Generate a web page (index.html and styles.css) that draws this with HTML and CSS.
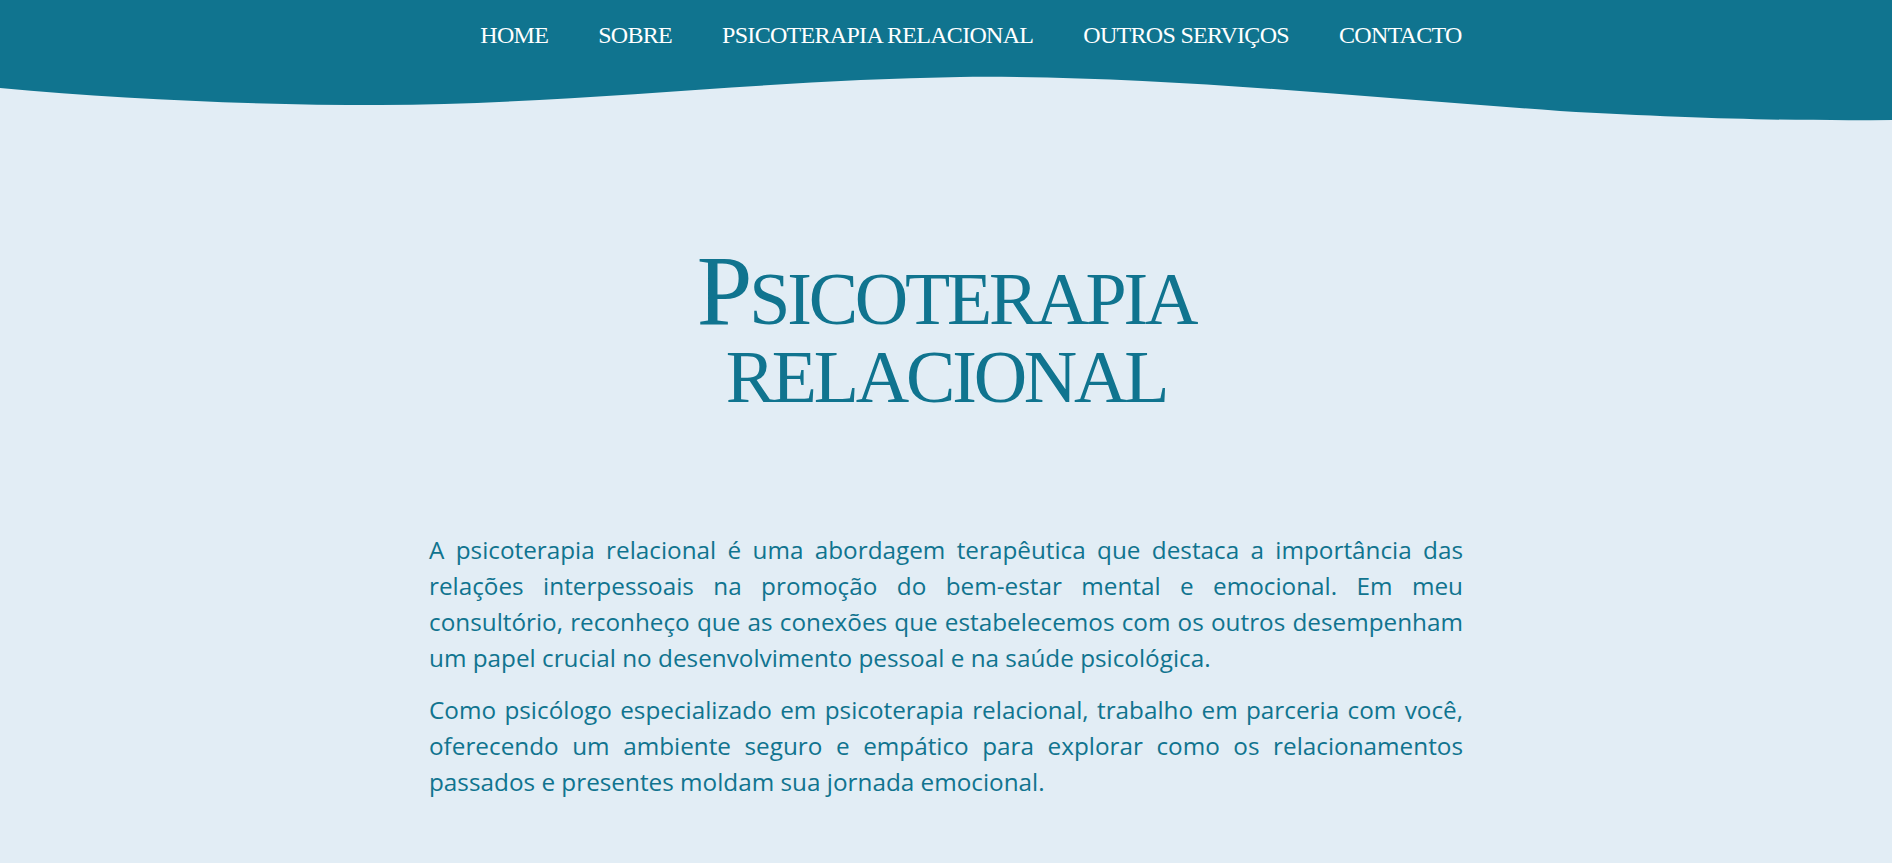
FILE: index.html
```html
<!DOCTYPE html>
<html lang="pt">
<head>
<meta charset="utf-8">
<title>Psicoterapia Relacional</title>
<link rel="stylesheet" href="styles.css">
</head>
<body>
<header class="site-header">
  <nav class="main-nav">
    <a href="#" class="nav-link">HOME</a>
    <a href="#" class="nav-link">SOBRE</a>
    <a href="#" class="nav-link">PSICOTERAPIA RELACIONAL</a>
    <a href="#" class="nav-link">OUTROS SERVIÇOS</a>
    <a href="#" class="nav-link">CONTACTO</a>
  </nav>
</header>
<svg class="wave" viewBox="0 0 1892 46" preserveAspectRatio="none" aria-hidden="true">
  <path d="M0 12 C 120 23, 250 29, 380 29 C 560 29, 760 4, 960 1 C 1150 -1, 1350 20, 1560 35 C 1700 43, 1800 45, 1892 44 L1892 0 L0 0 Z" fill="#10748f"/>
</svg>
<main class="content">
  <h1 class="page-title">Psicoterapia<br>relacional</h1>
  <div class="text-block">
    <p>A psicoterapia relacional é uma abordagem terapêutica que destaca a importância das relações interpessoais na promoção do bem-estar mental e emocional. Em meu consultório, reconheço que as conexões que estabelecemos com os outros desempenham um papel crucial no desenvolvimento pessoal e na saúde psicológica.</p>
    <p>Como psicólogo especializado em psicoterapia relacional, trabalho em parceria com você, oferecendo um ambiente seguro e empático para explorar como os relacionamentos passados e presentes moldam sua jornada emocional.</p>
  </div>
</main>
</body>
</html>
```

FILE: styles.css
```css
html, body {
  margin: 0;
  padding: 0;
}
body {
  background: #e2edf5;
  color: #10748f;
  font-family: "Open Sans", "Lato", sans-serif;
}
.site-header {
  background: #10748f;
  height: 76px;
}
.main-nav {
  display: flex;
  justify-content: center;
  gap: 50px;
  padding-top: 20px;
  padding-left: 50px;
}
.nav-link {
  font-family: "Liberation Serif", serif;
  font-size: 24px;
  letter-spacing: -0.7px;
  line-height: 30px;
  color: #ffffff;
  text-decoration: none;
}
.wave {
  display: block;
  width: 100%;
  height: 46px;
}
.content {
  padding-top: 130px;
  padding-bottom: 40px;
}
.page-title {
  margin: 0;
  text-align: center;
  font-family: "Liberation Serif", serif;
  font-weight: normal;
  font-size: 74px;
  line-height: 78px;
  letter-spacing: -3.2px;
  text-transform: uppercase;
  color: #10748f;
}
.page-title::first-letter {
  font-size: 100px;
}
.text-block {
  max-width: 1034px;
  margin: 116px auto 0;
}
.text-block p {
  margin: 0 0 16px;
  font-size: 24.3px;
  line-height: 36px;
  text-align: justify;
}
```
